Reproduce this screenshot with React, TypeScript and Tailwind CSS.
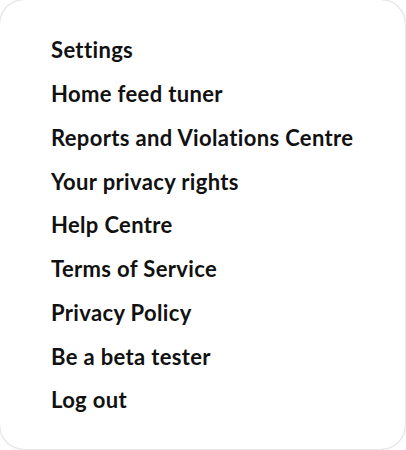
const items = [
  "Settings",
  "Home feed tuner",
  "Reports and Violations Centre",
  "Your privacy rights",
  "Help Centre",
  "Terms of Service",
  "Privacy Policy",
  "Be a beta tester",
  "Log out",
];

export default function App() {
  return (
    <div className="w-[406px] h-[450px] bg-white">
      <div className="h-[449px] w-[405px] rounded-[24px] bg-white shadow-[0_0_2px_rgba(0,0,0,0.35)] pt-[28px] px-[51px]">
        <ul className="flex flex-col">
          {items.map((item) => (
            <li
              key={item}
              className="h-[43.75px] flex items-center text-[22px] tracking-[0.35px] font-bold text-[#111111] font-['Lato',sans-serif]"
            >
              {item}
            </li>
          ))}
        </ul>
      </div>
    </div>
  );
}
